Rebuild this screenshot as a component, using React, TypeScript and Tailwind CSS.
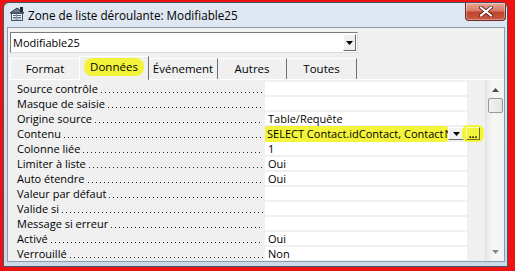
import React from "react";

const rows: { label: string; value?: string; special?: boolean; faint?: boolean }[] = [
  { label: "Source contrôle" },
  { label: "Masque de saisie" },
  { label: "Origine source", value: "Table/Requête" },
  { label: "Contenu", special: true },
  { label: "Colonne liée", value: "1" },
  { label: "Limiter à liste", value: "Oui" },
  { label: "Auto étendre", value: "Oui" },
  { label: "Valeur par défaut" },
  { label: "Valide si" },
  { label: "Message si erreur" },
  { label: "Activé", value: "Oui" },
  { label: "Verrouillé", value: "Non" },
];

function TitleIcon() {
  return (
    <svg width="17" height="16" viewBox="0 0 17 16">
      <path d="M1 7 L8 2 L15 7 Z" fill="#6b7a8a" stroke="#2e3a48" strokeWidth="1" />
      <rect x="11" y="1" width="3" height="5" fill="#1e2a38" />
      <rect x="2.5" y="7.5" width="11" height="7" fill="#eef2f6" stroke="#47576a" />
      <line x1="4" y1="9.5" x2="12" y2="9.5" stroke="#5b6b7d" />
      <line x1="4" y1="11.5" x2="12" y2="11.5" stroke="#5b6b7d" />
      <line x1="4" y1="13" x2="12" y2="13" stroke="#8b99a8" />
      <line x1="7.5" y1="8" x2="7.5" y2="14" stroke="#8b99a8" />
    </svg>
  );
}

function Triangle() {
  return (
    <svg width="7" height="4" viewBox="0 0 7 4">
      <path d="M0 0 H7 L3.5 4 Z" fill="#000" />
    </svg>
  );
}

export default function App() {
  return (
    <div
      className="w-[515px] h-[271px] bg-[#ee1313] pt-[2px] pl-[3px] pr-[7px] pb-[4px]"
      style={{ fontFamily: '"Open Sans", "Noto Sans", sans-serif' }}
    >
      <div className="h-full flex flex-col border border-[#44556a] rounded-t-[6px] bg-[linear-gradient(180deg,#dfe8f2_0%,#d6e1ee_40%,#cdd9e7_100%)]">
        {/* title bar */}
        <div className="h-[24px] flex items-start">
          <div className="pl-[2px] pt-[3px] w-[24px] flex justify-center">
            <TitleIcon />
          </div>
          <div className="pt-[4px] text-[11.7px] leading-[16px] text-black">
            Zone de liste déroulante: Modifiable25
          </div>
          <div className="flex-1" />
          <div className="mr-[1px] w-[41px] h-[18px] rounded-b-[4px] border border-[#6e2a22] border-t-0 bg-[linear-gradient(180deg,#e9a89a_0%,#d87a68_45%,#c0432e_55%,#c85a44_100%)] flex items-center justify-center shadow-[inset_0_0_0_1px_rgba(255,255,255,0.35)]">
            <svg width="14" height="11" viewBox="0 0 14 11">
              <path d="M2 1.5 L12 9.5 M12 1.5 L2 9.5" stroke="#5a1a14" strokeWidth="3.6" strokeLinecap="square" />
              <path d="M2 1.5 L12 9.5 M12 1.5 L2 9.5" stroke="#ffffff" strokeWidth="2" strokeLinecap="square" />
            </svg>
          </div>
        </div>

        {/* client area */}
        <div className="ml-[3px] mr-[2px] mb-[3px] border border-[#8b9bb0] bg-[#f0f0f0] flex flex-col pl-[2px] pt-[4px]">
          {/* combo */}
          <div className="w-[348px] h-[21px] flex border border-[#7b7b7b] border-r-[#dcdcdc] border-b-[#dcdcdc] bg-white">
            <div className="flex-1 pl-[2px] text-[11px] leading-[19px] text-black">Modifiable25</div>
            <div className="w-[13px] my-[1px] mr-[1px] bg-[#f0f0f0] border border-white border-r-[#6a6a6a] border-b-[#6a6a6a] flex items-center justify-center">
              <Triangle />
            </div>
          </div>

          {/* tabs */}
          <div className="mt-[2px] h-[24px] flex items-end text-[11.5px] text-black">
            <div className="w-[70px] h-[21px] border-t border-l border-white border-r border-r-[#a0a0a0] flex items-center justify-center">Format</div>
            <div className="w-[70px] h-[24px] -ml-[1px] border-t border-l border-white border-r border-r-[#6f6f6f] flex items-center justify-center relative z-10 bg-[#f0f0f0] -mb-[1px] pb-[3px]">
              <span className="bg-[#f3f33c] rounded-[8px] px-[6px] leading-[18px]">Données</span>
            </div>
            <div className="w-[69px] h-[21px] border-t border-white border-r border-r-[#6f6f6f] flex items-center justify-center">Événement</div>
            <div className="w-[69px] h-[21px] border-t border-white border-r border-r-[#6f6f6f] flex items-center justify-center">Autres</div>
            <div className="w-[70px] h-[21px] border-t border-white border-r border-r-[#6f6f6f] flex items-center justify-center">Toutes</div>
          </div>

          {/* property grid */}
          <div className="h-[182px] flex border-t border-white">
            <div className="w-[475px] flex flex-col pt-[1px]">
              {rows.map((r) => (
                <div key={r.label} className="h-[15px] flex items-center text-[11px] leading-[15px] text-black">
                  <div className="w-[255px] pl-[7px] pr-[2px] flex items-end h-[15px]">
                    <span className="whitespace-nowrap">{r.label}</span>
                    <span className="flex-1 ml-[3px] mb-[3px] h-[1px] bg-[linear-gradient(90deg,#222_1px,transparent_1px)] bg-[length:4px_1px] bg-repeat-x" />
                  </div>
                  {r.special ? (
                    <div className="flex items-center h-[15px]">
                      <div className="w-[183px] h-[16px] bg-[#f4f43a] rounded-r-[3px] pl-[2px] whitespace-nowrap overflow-hidden leading-[16px] flex items-center">
                        <span>SELECT Contact.idContact, Contact</span>
                        <span className="inline-block w-[2px] h-[13px] bg-black mx-[0.5px]" />
                        <span>N</span>
                      </div>
                      <div className="w-[17px] h-[13px] bg-[#f0f0f0] border border-white border-r-[#6a6a6a] border-b-[#6a6a6a] flex items-center justify-center">
                        <Triangle />
                      </div>
                      <div className="ml-[-3px] w-[22px] h-[17px] bg-[#f4f43a] rounded-[6px] flex items-center justify-center">
                        <div className="w-[14px] h-[13px] border border-[#f8f8c0] border-r-[#6a6a20] border-b-[#6a6a20] flex items-end justify-center text-[10px] leading-[9px] font-bold">
                          ...
                        </div>
                      </div>
                    </div>
                  ) : (
                    <div className="w-[202px] h-[13px] bg-white pl-[3px] leading-[13px] text-[11px]">{r.value ?? ""}</div>
                  )}
                </div>
              ))}
            </div>
            {/* scrollbar */}
            <div className="w-[19px] flex flex-col items-center border-l border-[#e3e3e3] bg-[linear-gradient(90deg,#e8e8e8,#f6f6f6_40%,#f3f3f3)]">
              <div className="h-[17px] flex items-center justify-center pt-[2px]">
                <svg width="7" height="4" viewBox="0 0 7 4">
                  <path d="M0 4 H7 L3.5 0 Z" fill="#4a4a4a" />
                </svg>
              </div>
              <div className="mt-[1px] w-[15px] h-[15px] rounded-[2px] border border-[#979797] bg-[linear-gradient(90deg,#f3f3f3,#e3e3e3)]" />
              <div className="flex-1" />
              <div className="h-[17px] flex items-center justify-center pb-[2px]">
                <svg width="7" height="4" viewBox="0 0 7 4">
                  <path d="M0 0 H7 L3.5 4 Z" fill="#8a8a8a" />
                </svg>
              </div>
            </div>
          </div>
        </div>
      </div>
    </div>
  );
}
